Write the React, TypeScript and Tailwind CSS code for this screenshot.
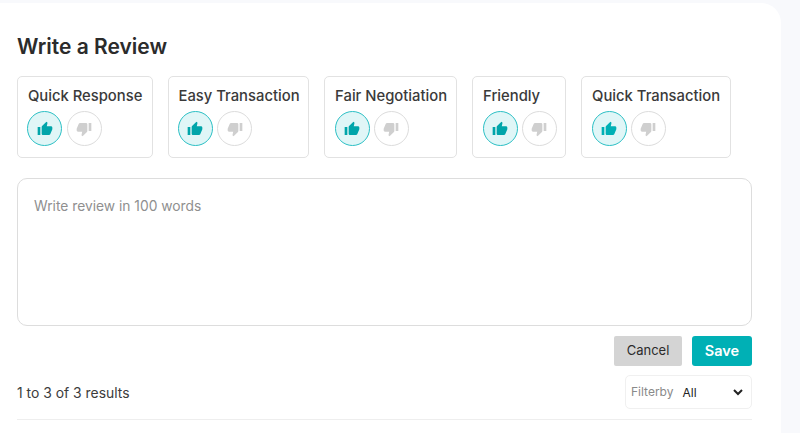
import React from 'react';
import { MdThumbUp, MdThumbDown } from 'react-icons/md';

const tags = [
  { label: 'Quick Response', width: 'w-[135.6px]', color: 'text-[#00a5aa]' },
  { label: 'Easy Transaction', width: 'w-[141.6px]', color: 'text-[#00a5aa]' },
  { label: 'Fair Negotiation', width: 'w-[133px]', color: 'text-[#00a5aa]' },
  { label: 'Friendly', width: 'w-[94px]', color: 'text-[#00a5aa]' },
  { label: 'Quick Transaction', width: 'w-[150px]', color: 'text-[#00b0b5]' },
];

function TagCard({ label, width, color }: { label: string; width: string; color: string }) {
  return (
    <div className={`${width} h-[82px] shrink-0 rounded-[5px] border border-[#e2e2e2] pl-[9.4px] pt-[9px]`}>
      <div className="pl-[0.5px] text-[14.8px] leading-[20px] font-medium text-[#3a3a3a] whitespace-nowrap">{label}</div>
      <div className="flex gap-[4.4px] mt-[5px]">
        <button className={`w-[35px] h-[35px] rounded-full border border-[#2cc0c5] bg-[#e0f6f7] flex items-center justify-center ${color}`}>
          <MdThumbUp size={16} />
        </button>
        <button className="w-[35px] h-[35px] rounded-full border border-[#dcdcdc] bg-white flex items-center justify-center text-[#cfcfcf]">
          <MdThumbDown size={16} />
        </button>
      </div>
    </div>
  );
}

export default function App() {
  return (
    <div className="h-[433px] w-[800px] overflow-hidden bg-[#f8f9fc] pt-[3px] font-['Inter',sans-serif]">
      <div className="h-[430px] w-[781px] rounded-tr-[20px] bg-white pl-[17px] pr-[29px] pt-[31px]">
        <h1 className="text-[21px] leading-[26px] font-semibold text-[#2b2b2b]">Write a Review</h1>
        <div className="flex gap-[15px] mt-[16px]">
          {tags.map((t) => (
            <TagCard key={t.label} {...t} />
          ))}
        </div>
        <textarea
          placeholder="Write review in 100 words"
          className="block w-full h-[148px] mt-[20px] resize-none rounded-[10px] border border-[#dddddd] px-[16px] py-[18px] text-[13.8px] leading-[18px] text-[#333] placeholder:text-[#8f8f8f] outline-none"
        />
        <div className="flex justify-end gap-[10px] mt-[10px]">
          <button className="w-[68px] h-[30px] rounded-[2px] bg-[#d4d4d4] text-[13px] text-[#2b2b2b]">Cancel</button>
          <button className="w-[60px] h-[30px] rounded-[3px] bg-[#00b0b5] pb-[1px] text-[14.5px] font-semibold text-white">Save</button>
        </div>
        <div className="flex items-center justify-between mt-[9px]">
          <span className="pt-[3px] text-[13.9px] text-[#3c3c3c]">1 to 3 of 3 results</span>
          <div className="flex items-center w-[127px] h-[34px] rounded-[5px] border border-[#f0f0f0] pl-[5px] pr-[5px]">
            <span className="text-[12px] text-[#8a8a8a]">Filterby</span>
            <select className="flex-1 ml-[5px] bg-white text-[12px] text-[#222] outline-none">
              <option>All</option>
            </select>
          </div>
        </div>
        <div className="border-t border-[#eeeeee] mt-[10px]" />
      </div>
    </div>
  );
}
